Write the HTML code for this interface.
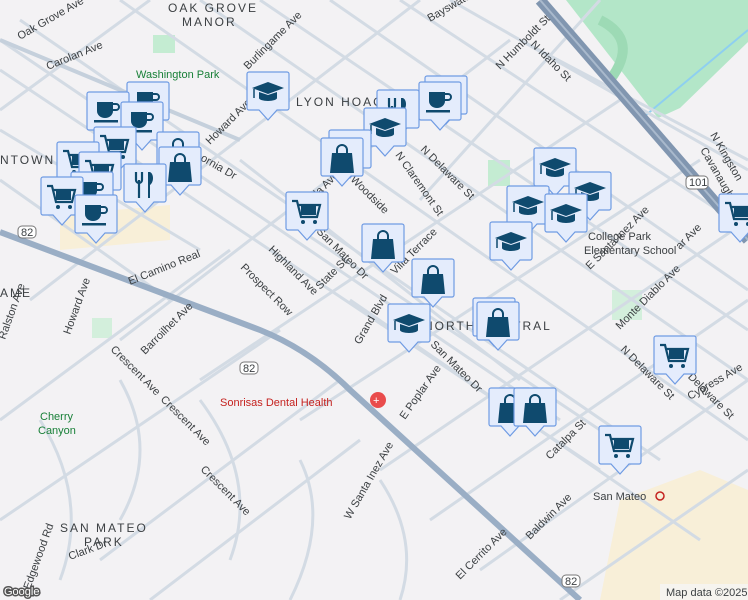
<!DOCTYPE html>
<html><head><meta charset="utf-8"><style>
html,body{margin:0;padding:0;width:748px;height:600px;overflow:hidden;background:#f3f2f4}
svg{display:block}
text{font-family:"Liberation Sans",sans-serif;fill:#3c4043;font-size:11px}
.g{fill:#188038}
.d{font-size:12px;letter-spacing:2px;fill:#3c4043}
</style></head><body>
<svg width="748" height="600" viewBox="0 0 748 600">
<defs>
<g id="mk">
<path d="M-19,-48 h38 a2,2 0 0 1 2,2 v34 a2,2 0 0 1 -2,2 h-10 l-9,10 l-9,-10 h-10 a2,2 0 0 1 -2,-2 v-34 a2,2 0 0 1 2,-2z" fill="#e4ecfc" stroke="#6f9be3" stroke-width="1.2"/>
</g>
<g id="cart" fill="#0f4a6e"><use href="#mk"/><path d="M-15,-39 h5 l4,16 h16 l3,-12 h-21" fill="none" stroke="#0f4a6e" stroke-width="2.2"/><rect x="-6" y="-34" width="15" height="9"/><circle cx="-4" cy="-18" r="2"/><circle cx="8" cy="-18" r="2"/></g>
<g id="cof" fill="#0f4a6e"><use href="#mk"/><path d="M-11,-38 h16 v9 a8,7 0 0 1 -16,0z"/><path d="M5,-36 h3 a3,3 0 0 1 0,6 h-3" fill="none" stroke="#0f4a6e" stroke-width="2"/><rect x="-14" y="-20" width="24" height="2.5"/></g>
<g id="bag" fill="#0f4a6e"><use href="#mk"/><path d="M-10,-33 h20 l2,20 h-24z"/><path d="M-5,-33 v-3 a5,5 0 0 1 10,0 v3" fill="none" stroke="#0f4a6e" stroke-width="2"/></g>
<g id="fork" fill="#0f4a6e"><use href="#mk"/><path d="M-9,-40 v8 a3,3 0 0 0 6,0 v-8 M-6,-32 v18" fill="none" stroke="#0f4a6e" stroke-width="2.2"/><path d="M5,-40 c4,2 4,10 0,13 v13 h-2 v-26z"/></g>
<g id="grad" fill="#0f4a6e"><use href="#mk"/><path d="M0,-38 l16,6 l-16,6 l-16,-6z"/><path d="M-9,-28 v6 a9,3 0 0 0 18,0 v-6 l-9,3z"/><path d="M-14,-31 v9" stroke="#0f4a6e" stroke-width="1.5"/></g>
</defs>
<!-- parks -->
<path d="M566,0 L748,0 L748,42 L680,108 L658,118 Z" fill="#b3e6c8"/>
<path d="M600,20 Q640,40 610,80" fill="none" stroke="#9ddab5" stroke-width="10"/>
<path d="M640,120 L748,30" stroke="#8ecff0" stroke-width="2"/>
<rect x="153" y="35" width="22" height="18" fill="#c4ecd2"/>
<rect x="488" y="160" width="22" height="26" fill="#c4ecd2"/>
<rect x="612" y="290" width="30" height="30" fill="#d3efdc"/>
<rect x="92" y="318" width="20" height="20" fill="#d3efdc"/>
<path d="M620,500 L700,470 L748,490 L748,600 L600,600 Z" fill="#f8efd8"/>
<path d="M60,215 L170,205 L170,240 L60,250Z" fill="#f8efd8"/>
<!-- minor roads -->
<g stroke="#d3dbe4" stroke-width="3" fill="none">
<path d="M0,40 L560,420 M0,70 L600,470 M20,20 L660,460 M120,0 L748,440 M200,0 L748,380 M260,0 L748,330 M330,0 L748,290 M400,0 L748,230 M450,0 L748,170 M520,40 L748,160 M0,130 L200,250 M0,180 L170,300 M240,160 L520,380 M300,230 L600,430 M350,300 L700,540"/>
<path d="M0,110 L150,0 M30,300 L420,0 M120,340 L510,40 M200,380 L620,100 M300,420 L700,160 M380,470 L748,220 M430,520 L748,300 M480,570 L748,380 M560,600 L748,470 M0,420 L230,250 M0,520 L280,330 M100,560 L340,380 M150,600 L360,440 M600,0 L420,200"/>
<path d="M120,380 Q160,450 120,520 M200,400 Q260,480 230,560 M300,460 Q330,520 290,600 M40,420 Q90,500 60,580 M380,480 Q420,540 400,600"/>
</g>
<!-- highways -->
<path d="M0,232 L260,330 Q310,350 350,390 L580,600" fill="none" stroke="#9aaec5" stroke-width="6"/>
<path d="M540,0 L748,240" fill="none" stroke="#8196b0" stroke-width="11"/>
<path d="M540,0 L748,240" fill="none" stroke="#a9b9cc" stroke-width="2"/>
<path d="M0,40 L240,140" stroke="#c5d0dc" stroke-width="4"/>
<!-- labels -->
<text x="168" y="12" class="d">OAK GROVE</text><text x="182" y="26" class="d">MANOR</text>
<text x="136" y="78" class="g" font-size="13">Washington Park</text>
<text x="296" y="106" class="d">LYON HOAG</text>
<text x="0" y="164" class="d">NTOWN</text>
<text x="0" y="297" class="d">AME</text>
<text x="424" y="330" class="d">NORTH CENTRAL</text>
<text x="40" y="420" class="g" font-size="12">Cherry</text><text x="38" y="434" class="g" font-size="12">Canyon</text>
<text x="60" y="532" class="d">SAN MATEO</text><text x="84" y="546" class="d">PARK</text>
<text x="220" y="406" fill="#c5221f" style="fill:#c5221f" font-size="12">Sonrisas Dental Health</text>
<circle cx="378" cy="400" r="8" fill="#e94c4c"/><text x="373" y="404" style="fill:#fff" font-size="10">+</text>
<text x="588" y="240" font-size="12">College Park</text><text x="584" y="254" font-size="12">Elementary School</text>
<text x="593" y="500" font-size="12">San Mateo</text><circle cx="660" cy="496" r="4" fill="none" stroke="#c5221f" stroke-width="1.5"/>
<text x="20" y="40" transform="rotate(-30 20 40)">Oak Grove Ave</text>
<text x="48" y="70" transform="rotate(-22 48 70)">Carolan Ave</text>
<text x="248" y="70" transform="rotate(-45 248 70)">Burlingame Ave</text>
<text x="210" y="145" transform="rotate(-45 210 145)">Howard Ave</text>
<text x="200" y="160" transform="rotate(30 200 160)">ornia Dr</text>
<text x="290" y="225" transform="rotate(-45 290 225)">Peninsula Ave</text>
<text x="316" y="232" transform="rotate(45 316 232)">San Mateo Dr</text>
<text x="130" y="285" transform="rotate(-22 130 285)" font-size="12">El Camino Real</text>
<text x="5" y="340" transform="rotate(-70 5 340)">Ralston Ave</text>
<text x="70" y="335" transform="rotate(-70 70 335)">Howard Ave</text>
<text x="145" y="355" transform="rotate(-45 145 355)">Barroilhet Ave</text>
<text x="240" y="268" transform="rotate(45 240 268)">Prospect Row</text>
<text x="268" y="250" transform="rotate(45 268 250)">Highland Ave</text>
<text x="320" y="290" transform="rotate(-45 320 290)">State St</text>
<text x="350" y="180" transform="rotate(45 350 180)">Woodside</text>
<text x="395" y="275" transform="rotate(-45 395 275)">Villa Terrace</text>
<text x="360" y="345" transform="rotate(-60 360 345)">Grand Blvd</text>
<text x="430" y="345" transform="rotate(45 430 345)">San Mateo Dr</text>
<text x="405" y="420" transform="rotate(-55 405 420)">E Poplar Ave</text>
<text x="420" y="150" transform="rotate(45 420 150)">N Delaware St</text>
<text x="395" y="155" transform="rotate(55 395 155)">N Claremont St</text>
<text x="530" y="45" transform="rotate(45 530 45)">N Idaho St</text>
<text x="500" y="70" transform="rotate(-45 500 70)">N Humboldt St</text>
<text x="430" y="22" transform="rotate(-30 430 22)">Bayswater</text>
<text x="590" y="270" transform="rotate(-45 590 270)">E Santa Inez Ave</text>
<text x="620" y="330" transform="rotate(-45 620 330)">Monte Diablo Ave</text>
<text x="620" y="350" transform="rotate(45 620 350)">N Delaware St</text>
<text x="680" y="370" transform="rotate(45 680 370)">S Delaware St</text>
<text x="690" y="400" transform="rotate(-30 690 400)">Cypress Ave</text>
<text x="550" y="460" transform="rotate(-45 550 460)">Catalpa St</text>
<text x="530" y="540" transform="rotate(-45 530 540)">Baldwin Ave</text>
<text x="460" y="580" transform="rotate(-45 460 580)">El Cerrito Ave</text>
<text x="350" y="520" transform="rotate(-60 350 520)">W Santa Inez Ave</text>
<text x="200" y="470" transform="rotate(45 200 470)">Crescent Ave</text>
<text x="160" y="400" transform="rotate(45 160 400)">Crescent Ave</text>
<text x="110" y="350" transform="rotate(45 110 350)">Crescent Ave</text>
<text x="30" y="590" transform="rotate(-70 30 590)">Edgewood Rd</text>
<text x="70" y="560" transform="rotate(-20 70 560)">Clark Dr</text>
<text x="700" y="150" transform="rotate(60 700 150)">Cavanaugh</text>
<text x="710" y="135" transform="rotate(60 710 135)">N Kingston</text>
<text x="680" y="250" transform="rotate(-45 680 250)">ar Ave</text>
<rect x="686" y="176" width="22" height="13" rx="4" fill="#fff" stroke="#777"/><text x="689" y="186" font-size="10">101</text>
<rect x="240" y="362" width="18" height="12" rx="4" fill="#fff" stroke="#777"/><text x="243" y="372" font-size="10">82</text>
<rect x="18" y="226" width="18" height="12" rx="4" fill="#fff" stroke="#777"/><text x="21" y="236" font-size="10">82</text>
<rect x="562" y="575" width="18" height="12" rx="4" fill="#fff" stroke="#777"/><text x="565" y="585" font-size="10">82</text>
<!-- markers -->
<use href="#cof" x="148" y="130"/>
<use href="#cof" x="108" y="140"/>
<use href="#cof" x="142" y="150"/>
<use href="#bag" x="178" y="180"/>
<use href="#cart" x="115" y="175"/>
<use href="#cart" x="78" y="190"/>
<use href="#cart" x="100" y="200"/>
<use href="#bag" x="180" y="195"/>
<use href="#cof" x="92" y="220"/>
<use href="#fork" x="145" y="212"/>
<use href="#cart" x="62" y="225"/>
<use href="#cof" x="96" y="243"/>
<use href="#grad" x="268" y="120"/>
<use href="#cof" x="446" y="124"/>
<use href="#cof" x="440" y="130"/>
<use href="#fork" x="398" y="138"/>
<use href="#grad" x="385" y="156"/>
<use href="#fork" x="350" y="178"/>
<use href="#bag" x="342" y="186"/>
<use href="#cart" x="307" y="240"/>
<use href="#bag" x="383" y="272"/>
<use href="#bag" x="433" y="307"/>
<use href="#grad" x="409" y="352"/>
<use href="#bag" x="494" y="346"/>
<use href="#bag" x="498" y="350"/>
<use href="#grad" x="555" y="196"/>
<use href="#grad" x="590" y="220"/>
<use href="#grad" x="528" y="234"/>
<use href="#grad" x="566" y="242"/>
<use href="#grad" x="511" y="270"/>
<use href="#bag" x="510" y="436"/>
<use href="#bag" x="535" y="436"/>
<use href="#cart" x="675" y="384"/>
<use href="#cart" x="620" y="474"/>
<use href="#cart" x="740" y="242"/>
<!-- footer -->
<text x="4" y="595" font-size="18" style="fill:#fff;stroke:#555;stroke-width:3;paint-order:stroke">Google</text>
<rect x="660" y="584" width="88" height="16" fill="#f5f5f5" opacity=".8"/>
<text x="666" y="596" font-size="10">Map data ©2025</text>
</svg>
</body></html>
